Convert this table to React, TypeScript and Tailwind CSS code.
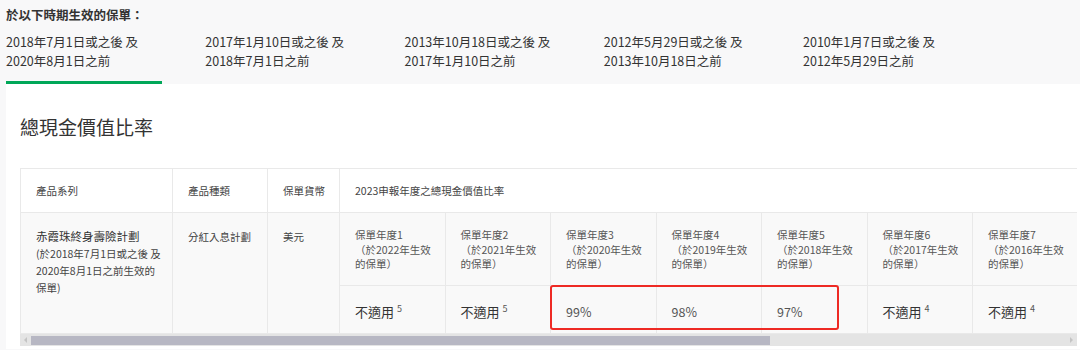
import React from "react";

const tabs = [
  ["2018年7月1日或之後 及", "2020年8月1日之前"],
  ["2017年1月10日或之後 及", "2018年7月1日之前"],
  ["2013年10月18日或之後 及", "2017年1月10日之前"],
  ["2012年5月29日或之後 及", "2013年10月18日之前"],
  ["2010年1月7日或之後 及", "2012年5月29日之前"],
];

const years = [
  { n: 1, y: 2022, v: "不適用", sup: "5" },
  { n: 2, y: 2021, v: "不適用", sup: "5" },
  { n: 3, y: 2020, v: "99%" },
  { n: 4, y: 2019, v: "98%" },
  { n: 5, y: 2018, v: "97%" },
  { n: 6, y: 2017, v: "不適用", sup: "4" },
  { n: 7, y: 2016, v: "不適用", sup: "4" },
];

const cell = "border border-[#e9e9e9] px-[15px] text-left";

export default function App() {
  return (
    <div
      className="min-h-[350px] w-[1080px] bg-[#f8f8f9] text-[#333]"
      style={{ fontFamily: '"Noto Sans CJK TC", "Noto Sans", sans-serif' }}
    >
      {/* period tabs */}
      <div className="px-[6px] pt-[5px]">
        <h2 className="text-[12.5px] font-bold leading-[19px]">於以下時期生效的保單：</h2>
        <div className="mt-[8px] flex gap-[43.25px]">
          {tabs.map((t, i) => (
            <div key={i} className="w-[156px] shrink-0">
              <div className="whitespace-nowrap text-[12.5px] leading-[19px] text-[#333]">
                {t[0]}
                <br />
                {t[1]}
              </div>
              <div className={i === 0 ? "mt-[11px] h-[3px] bg-[#00a758]" : "mt-[11px] h-[3px]"} />
            </div>
          ))}
        </div>
      </div>

      {/* content panel */}
      <div className="ml-[6px] h-[265px] bg-white pl-[14px] pt-[29px]">
        <h3 className="text-[19px] leading-[28px] text-[#333]">總現金價值比率</h3>

        <div className="relative mt-[27px] w-[1057px] overflow-hidden">
          <table className="w-[1058px] table-fixed border-collapse">
            <colgroup>
              <col className="w-[152px]" />
              <col className="w-[95px]" />
              <col className="w-[72px]" />
              {years.map((y) => (
                <col key={y.n} className="w-[105.5px]" />
              ))}
            </colgroup>
            <thead>
              <tr className="h-[44px] whitespace-nowrap bg-white text-[10.5px] text-[#444]">
                <th className={cell + " font-normal"}>產品系列</th>
                <th className={cell + " font-normal"}>產品種類</th>
                <th className={cell + " font-normal"}>保單貨幣</th>
                <th className={cell + " font-normal"} colSpan={years.length}>
                  2023申報年度之總現金價值比率
                </th>
              </tr>
            </thead>
            <tbody className="bg-[#f9f9f9]">
              <tr className="h-[73px]">
                <td className={cell + " align-top pt-[15px]"} rowSpan={2}>
                  <div className="text-[11.5px] leading-[17px] text-[#333]">赤霞珠終身壽險計劃</div>
                  <div className="whitespace-nowrap text-[10.5px] leading-[17px] text-[#444]">
                    (於2018年7月1日或之後 及
                    <br />
                    2020年8月1日之前生效的
                    <br />
                    保單)
                  </div>
                </td>
                <td className={cell + " align-top pt-[15px] text-[10.5px] leading-[17px] text-[#444]"} rowSpan={2}>
                  分紅入息計劃
                </td>
                <td className={cell + " align-top pt-[15px] text-[10.5px] leading-[17px] text-[#444]"} rowSpan={2}>
                  美元
                </td>
                {years.map((y) => (
                  <td key={y.n} className={cell + " align-top pt-[15px] whitespace-nowrap text-[10.5px] leading-[14.5px] text-[#555]"}>
                    保單年度{y.n}
                    <br />
                    （於{y.y}年生效
                    <br />
                    的保單）
                  </td>
                ))}
              </tr>
              <tr className="h-[48px]">
                {years.map((y) => (
                  <td key={y.n} className={cell + " align-middle whitespace-nowrap"}>
                    {y.sup ? (
                      <span className="text-[13px] text-[#333]">
                        {y.v} <sup className="text-[9px] text-[#555]">{y.sup}</sup>
                      </span>
                    ) : (
                      <span className="text-[12.5px] text-[#555]">{y.v}</span>
                    )}
                  </td>
                ))}
              </tr>
            </tbody>
          </table>

          {/* highlight box */}
          <div className="absolute left-[530px] top-[117px] h-[45px] w-[289px] rounded-[3px] border-2 border-[#ee2a24]" />

          {/* scrollbar */}
          <div className="flex h-[12px] items-center bg-[#e4e4e4]">
            <div className="flex w-[11px] shrink-0 items-center justify-center">
              <div className="h-0 w-0 border-y-[3px] border-r-[3px] border-y-transparent border-r-[#c4c4c4]" />
            </div>
            <div className="h-[9px] w-[739px] bg-[#b7b7c3]" />
            <div className="flex-1" />
            <div className="flex w-[11px] shrink-0 items-center justify-center">
              <div className="h-0 w-0 border-y-[3px] border-l-[3px] border-y-transparent border-l-[#c4c4c4]" />
            </div>
          </div>
        </div>
      </div>
    </div>
  );
}
